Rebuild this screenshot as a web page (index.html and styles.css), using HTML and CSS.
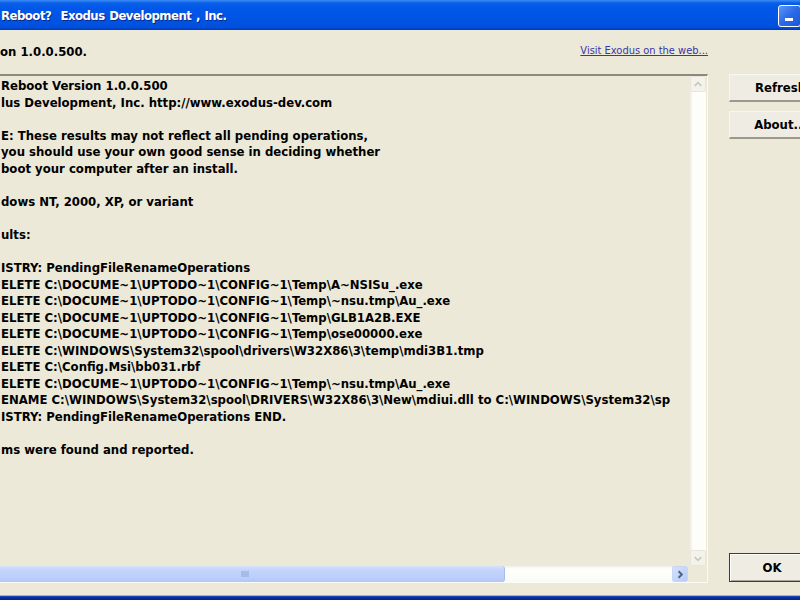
FILE: index.html
```html
<!DOCTYPE html>
<html lang="en">
<head>
    <meta charset="UTF-8">
    <title>Reboot? Exodus Development, Inc.</title>
    <link rel="stylesheet" href="styles.css">
</head>
<body>
    <div class="window">
        <div class="titlebar">
            <span class="title">Reboot?&nbsp; Exodus Development , Inc.</span>
            <span class="min-btn"><span class="min-glyph"></span></span>
        </div>

        <div class="dialog">
            <div class="header">
                <span class="version">on 1.0.0.500.</span>
                <a class="weblink" href="#">Visit Exodus on the web...</a>
            </div>

            <div class="body">
                <div class="results">
                    <div class="results-text">Reboot Version 1.0.0.500
lus Development, Inc. http://www.exodus-dev.com

E: These results may not reflect all pending operations,
you should use your own good sense in deciding whether
boot your computer after an install.

dows NT, 2000, XP, or variant

ults:

ISTRY: PendingFileRenameOperations
ELETE C:\DOCUME~1\UPTODO~1\CONFIG~1\Temp\A~NSISu_.exe
ELETE C:\DOCUME~1\UPTODO~1\CONFIG~1\Temp\~nsu.tmp\Au_.exe
ELETE C:\DOCUME~1\UPTODO~1\CONFIG~1\Temp\GLB1A2B.EXE
ELETE C:\DOCUME~1\UPTODO~1\CONFIG~1\Temp\ose00000.exe
ELETE C:\WINDOWS\System32\spool\drivers\W32X86\3\temp\mdi3B1.tmp
ELETE C:\Config.Msi\bb031.rbf
ELETE C:\DOCUME~1\UPTODO~1\CONFIG~1\Temp\~nsu.tmp\Au_.exe
ENAME C:\WINDOWS\System32\spool\DRIVERS\W32X86\3\New\mdiui.dll to C:\WINDOWS\System32\sp
ISTRY: PendingFileRenameOperations END.

ms were found and reported.</div>

                    <div class="vscroll">
                        <span class="sb-btn sb-btn-off">
                            <svg viewBox="0 0 15 15" width="15" height="15"><path d="M4 9 L7.5 5.5 L11 9" fill="none" stroke="#c9c7ba" stroke-width="1.6"/></svg>
                        </span>
                        <span class="sb-track"></span>
                        <span class="sb-btn sb-btn-off">
                            <svg viewBox="0 0 15 15" width="15" height="15"><path d="M4 6 L7.5 9.5 L11 6" fill="none" stroke="#c9c7ba" stroke-width="1.6"/></svg>
                        </span>
                    </div>

                    <div class="hscroll">
                        <span class="sb-thumb">
                            <svg viewBox="0 0 8 8" width="8" height="8"><path d="M1 1 V7 M3 1 V7 M5 1 V7 M7 1 V7" stroke="#8ea6de" stroke-width="1"/></svg>
                        </span>
                        <span class="sb-track"></span>
                        <span class="sb-btn sb-btn-on">
                            <svg viewBox="0 0 15 15" width="15" height="15"><path d="M6 4 L9.5 7.5 L6 11" fill="none" stroke="#4d6185" stroke-width="2"/></svg>
                        </span>
                    </div>

                    <div class="corner"></div>
                </div>

                <div class="actions">
                    <button class="btn">Refresh</button>
                    <button class="btn">About...</button>
                    <button class="btn btn-default">OK</button>
                </div>
            </div>
        </div>

        <div class="frame-bottom"></div>
    </div>
</body>
</html>
```

FILE: styles.css
```css
* {
    margin: 0;
    padding: 0;
    box-sizing: border-box;
}

body {
    width: 800px;
    height: 600px;
    overflow: hidden;
    background-color: #ece9d8;
    font-family: "DejaVu Sans Condensed", "DejaVu Sans", sans-serif;
    color: #000;
}

.window {
    display: flex;
    flex-direction: column;
    height: 600px;
}

/* title bar */

.titlebar {
    height: 30px;
    flex: 0 0 30px;
    display: flex;
    align-items: center;
    justify-content: space-between;
    background: linear-gradient(#3c8cf8 0, #0a5fe8 3px, #0058e8 8px, #0054e3 20px, #0050dd 27px, #0044c8 29px, #0036b0 30px);
    padding-left: 1px;
}

.title {
    color: #fff;
    font-weight: bold;
    font-size: 13px;
    letter-spacing: -0.5px;
    word-spacing: 1px;
    text-shadow: 1px 1px #0a2a8a;
    white-space: nowrap;
}

.min-btn {
    width: 23px;
    height: 22px;
    margin-right: -1px;
    margin-top: 2px;
    border: 1px solid #fff;
    border-radius: 3px;
    background: linear-gradient(135deg, #5d95f6, #2a6ae8 50%, #1c58d8);
    display: flex;
    align-items: flex-end;
    padding: 0 0 5px 6px;
}

.min-glyph {
    display: block;
    width: 8px;
    height: 3px;
    background-color: #fff;
}

/* dialog */

.dialog {
    flex: 1;
    display: flex;
    flex-direction: column;
    min-height: 0;
}

.header {
    height: 44px;
    flex: 0 0 44px;
    display: flex;
    align-items: center;
    justify-content: space-between;
    padding: 0 92px 4px 0;
}

.version {
    font-weight: bold;
    font-size: 13px;
    margin-top: 3px;
}

.weblink {
    font-size: 11px;
    color: #3a35a8;
    text-decoration: underline;
}

.body {
    display: flex;
    gap: 21px;
    height: 509px;
    overflow: hidden;
}

/* results box */

.results {
    flex: 0 0 708px;
    display: grid;
    grid-template-columns: 1fr 16px;
    grid-template-rows: 1fr 16px;
    border-top: 2px solid #8d8a7d;
    border-right: 1px solid #fbfaf6;
    border-bottom: 1px solid #fbfaf6;
    padding-right: 1px;
}

.results-text {
    font-weight: bold;
    font-size: 13px;
    line-height: 16.55px;
    white-space: pre;
    overflow: hidden;
    padding: 2px 0 0 1px;
}

.vscroll {
    display: flex;
    flex-direction: column;
    background: linear-gradient(90deg, #eeede5, #fdfdfa 3px, #fefefb);
}

.sb-track {
    flex: 1;
}

.sb-btn {
    width: 16px;
    height: 16px;
    display: flex;
    align-items: center;
    justify-content: center;
    border-radius: 2px;
}

.sb-btn-off {
    background-color: #f3f2eb;
    border: 1px solid #e8e6db;
}

.sb-btn-on {
    background: linear-gradient(135deg, #d6e2fc, #b7cbf6);
    border: 1px solid #c6d5f8;
}

.hscroll {
    display: flex;
    background: linear-gradient(#f0efe8, #fefefb 3px, #fbfbf6);
    margin-right: 2px;
}

.sb-thumb {
    width: 505px;
    display: flex;
    align-items: center;
    justify-content: center;
    padding-right: 14px;
    background: linear-gradient(#d6e1fc, #c3d4fb 4px, #bccefa 12px, #b2c6f4);
    border-radius: 0 3px 3px 0;
    border-right: 1px solid #a9bce8;
}

.corner {
    background-color: #ece9d8;
}

/* buttons */

.actions {
    flex: 0 0 104px;
    display: flex;
    flex-direction: column;
    gap: 9px;
    padding-bottom: 1px;
}

.btn {
    height: 28px;
    font-family: inherit;
    font-weight: bold;
    font-size: 13px;
    color: #000;
    background-color: #efede3;
    border: 1px solid #f7f6f0;
    border-bottom: 2px solid #9b998c;
    border-right: 2px solid #9b998c;
}

.btn-default {
    margin-top: auto;
    height: 29px;
    border: 1px solid #3c3c3c;
    box-shadow: inset 1px 1px #fff, inset -1px -1px #a8a697;
    padding-right: 18px;
}

.frame-bottom {
    height: 5px;
    flex: 0 0 5px;
    margin-top: 12px;
    background: linear-gradient(#8eb0f4 0, #8eb0f4 1px, #1a4ad0 1px, #0a2a8a 3px, #0a2680);
}
```
